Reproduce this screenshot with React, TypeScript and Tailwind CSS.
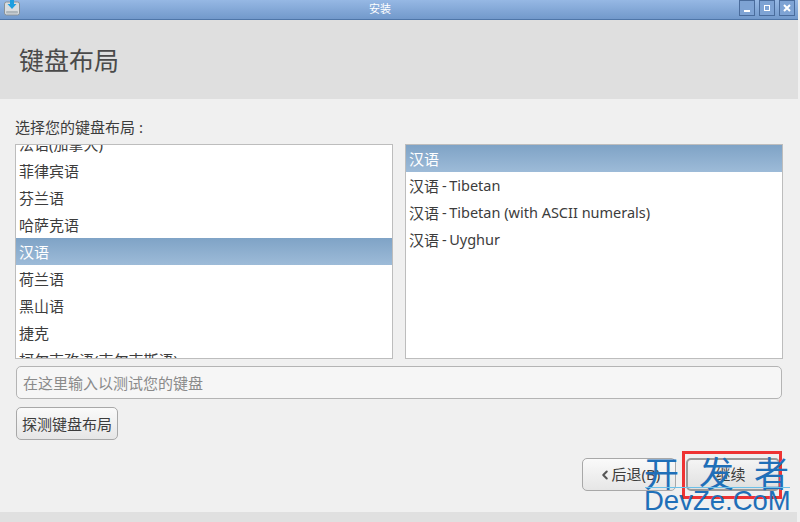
import { ChevronLeft } from 'lucide-react'
import type { ReactNode } from 'react'

const leftRows = ['法语(加拿大)', '菲律宾语', '芬兰语', '哈萨克语', '汉语', '荷兰语', '黑山语', '捷克', '柯尔克孜语(吉尔吉斯语)']
const font = "font-['Noto_Sans','Noto_Sans_CJK_SC',sans-serif]"

function Row({ selected, children }: { selected?: boolean; children: ReactNode }) {
  return (
    <div
      className={
        selected
          ? 'flex h-[27px] items-center bg-gradient-to-b from-[#7fa3c6] to-[#9dbbd8] pl-[3px] pt-[1px] text-white'
          : 'flex h-[27px] items-center pl-[3px] pt-[1px] text-[#3c3c3c]'
      }
    >
      {children}
    </div>
  )
}

function VariantRow({ name }: { name: string }) {
  return (
    <Row>
      汉语
      <span className="ml-[3px] text-[14.5px]">-</span>
      <span className="ml-[2.5px] text-[14.5px]">{name}</span>
    </Row>
  )
}

function WinButton({ children }: { children: ReactNode }) {
  return (
    <div className="flex h-[16px] w-[16px] items-center justify-center border border-[#4a6c9c] bg-[#7ea3d4]">
      {children}
    </div>
  )
}

export default function App() {
  return (
    <div className={`relative flex h-[522px] w-[800px] flex-col overflow-hidden bg-[#f0f0f0] text-[15px] ${font}`}>
      <div className="relative mr-[2px] flex h-[20px] shrink-0 items-center justify-center border-b border-[#4f76a8] bg-gradient-to-b from-[#96b8e4] to-[#7299cb] pb-[1px] pr-[38px] text-[11px] text-white">
        <svg className="absolute left-[4px] top-0" width="16" height="16" viewBox="0 0 16 16">
          <rect x="0.5" y="2" width="15" height="13" rx="2" fill="#d9dde0" stroke="#8a9298" />
          <rect x="2" y="11" width="12" height="2.5" rx="1" fill="#aeb6bb" />
          <path d="M6 0h4v4h2.5L8 9 3.5 4H6z" fill="#1e9fe0" />
        </svg>
        安装
        <div className="absolute right-[3px] top-0 flex gap-[4px]">
          <WinButton>
            <div className="mt-[5px] h-[2px] w-[6px] bg-white" />
          </WinButton>
          <WinButton>
            <div className="h-[6px] w-[6px] border-[1.5px] border-white" />
          </WinButton>
          <WinButton>
            <svg width="8" height="8" viewBox="0 0 8 8">
              <path d="M1 1l6 6M7 1L1 7" stroke="#fff" strokeWidth="2" />
            </svg>
          </WinButton>
        </div>
      </div>

      <header className="mr-[2px] flex h-[79px] shrink-0 items-center bg-[#dfdfdf] pl-[19px] pt-[3px] text-[25px] text-[#4a4a4a]">
        键盘布局
      </header>

      <main className="flex min-h-0 flex-1 flex-col pl-[15px] pt-[19px]">
        <p className="h-[26px] leading-[18px] text-[#3c3c3c]">选择您的键盘布局 :</p>
        <div className="flex gap-[12px]">
          <div className="h-[215px] w-[378px] overflow-hidden border border-[#bdbdbd] bg-white">
            <div className="-mt-[15px]">
              {leftRows.map((row) => (
                <Row key={row} selected={row === '汉语'}>
                  {row}
                </Row>
              ))}
            </div>
          </div>
          <div className="h-[215px] w-[378px] overflow-hidden border border-[#bdbdbd] bg-white">
            <Row selected>汉语</Row>
            <VariantRow name="Tibetan" />
            <VariantRow name="Tibetan (with ASCII numerals)" />
            <VariantRow name="Uyghur" />
          </div>
        </div>
        <div className="ml-[1px] mt-[7px] flex h-[33px] w-[766px] items-center rounded-[5px] border border-[#b4b4b4] bg-[#f6f6f6] pl-[6px] pt-[1px] text-[#8a8a8a]">
          在这里输入以测试您的键盘
        </div>
        <button className="ml-[1px] mt-[8px] flex h-[33px] w-[102px] items-center justify-center rounded-[5px] border border-[#a8a8a8] bg-gradient-to-b from-[#fafafa] to-[#e6e6e6] pt-[1px] text-[#3c3c3c]">
          探测键盘布局
        </button>
        <div className="mr-[20px] mt-[18px] flex justify-end gap-[10px]">
          <button className="flex h-[33px] w-[94px] items-center justify-center rounded-[5px] border border-[#a8a8a8] bg-gradient-to-b from-[#fafafa] to-[#e6e6e6] text-[#3c3c3c]">
            <ChevronLeft size={14} strokeWidth={3.5} className="text-[#555555]" />
            后退(B)
          </button>
          <button className="flex h-[33px] w-[94px] items-center justify-center rounded-[5px] border-2 border-[#9a9a9a] bg-gradient-to-b from-[#f4f4f4] to-[#e0e0e0] pr-[5px] text-[#3c3c3c]">
            继续
          </button>
        </div>
      </main>

      <div className="mr-[3px] h-[10px] shrink-0 bg-[#e0e0e0]" />

      <div className="absolute left-[682px] top-[451px] h-[48px] w-[100px] border-[3px] border-[#ee3333]" />
      <div className="absolute left-[644px] top-[453px] flex w-[145px] justify-between text-[35px] leading-[42px] text-[#1f6fb8]">
        <span>开</span>
        <span>发</span>
        <span>者</span>
      </div>
      <div className="absolute left-[645px] top-[487px] h-px w-[145px] bg-[#6cc0e8]" />
      <div className="absolute left-[644px] top-[485px] font-['Liberation_Sans',sans-serif] text-[27.5px] leading-[32px] text-[#1f6fb8]">
        DevZe.CoM
      </div>
    </div>
  )
}
